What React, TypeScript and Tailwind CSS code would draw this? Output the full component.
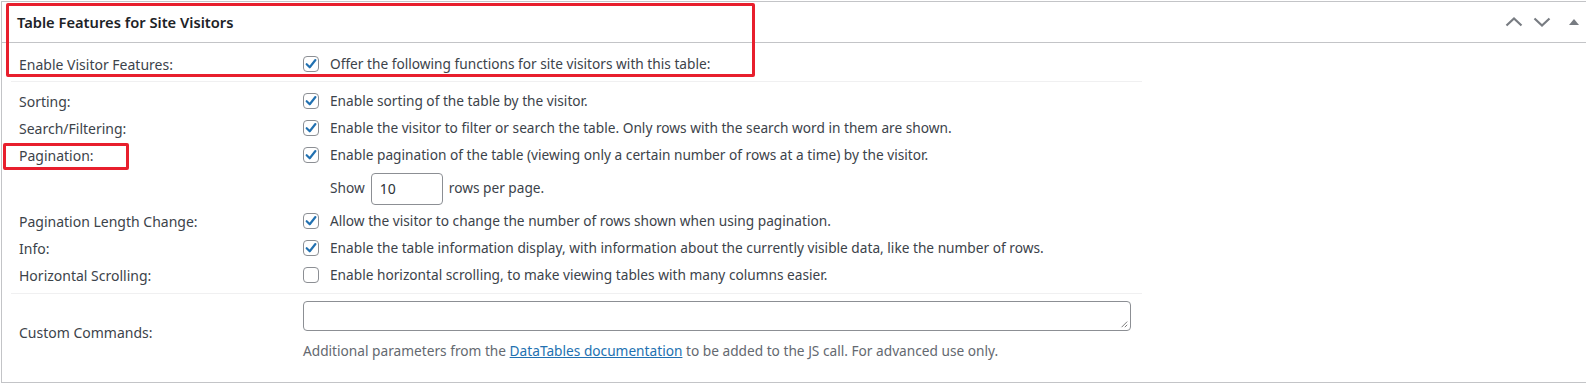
import React from "react";

const font = { fontFamily: '"Noto Sans", "Liberation Sans", Arial, sans-serif' };

function Check({ checked }: { checked: boolean }) {
  return (
    <span className="relative flex h-[16px] w-[16px] shrink-0 items-center justify-center rounded-[4px] border border-[#8c8f94] bg-white">
      {checked && (
        <svg viewBox="0 0 20 20" className="h-[18px] w-[18px] absolute left-[-2px] top-[-2px]">
          <path d="M5.2 10.2 L8.6 13.6 L14.9 5.6" fill="none" stroke="#2271b1" strokeWidth="2.4" strokeLinecap="round" strokeLinejoin="round" />
        </svg>
      )}
    </span>
  );
}

function Row({ label, checked, text }: { label: string; checked: boolean; text: string }) {
  return (
    <div className="flex h-[27px] items-center">
      <div className="w-[292px] pl-[8px] text-[14px] text-[#3c434a]">{label}</div>
      <div className="flex items-center gap-[11px] text-[13.7px] text-[#3c434a]">
        <Check checked={checked} />
        <span>{text}</span>
      </div>
    </div>
  );
}

export default function App() {
  return (
    <div className="relative h-[383px] w-[1586px] overflow-hidden bg-white" style={font}>
      <div className="ml-[1px] mt-[1px] h-[382px] border border-r-0 border-[#c3c4c7] bg-white">
        <div className="flex h-[41px] items-center justify-between border-b border-[#c3c4c7] pl-[15px]">
          <h2 className="text-[14.7px] font-semibold text-[#1d2327]">Table Features for Site Visitors</h2>
          <div className="flex items-center pr-[2px]">
            <span className="flex h-[36px] w-[28px] items-center justify-center">
              <svg viewBox="0 0 20 20" className="h-[20px] w-[20px]">
                <path d="M2.5 13.5 L10 6.5 L17.5 13.5" fill="none" stroke="#787c82" strokeWidth="2.2" />
              </svg>
            </span>
            <span className="flex h-[36px] w-[28px] items-center justify-center">
              <svg viewBox="0 0 20 20" className="h-[20px] w-[20px]">
                <path d="M2.5 6.5 L10 13.5 L17.5 6.5" fill="none" stroke="#787c82" strokeWidth="2.2" />
              </svg>
            </span>
            <span className="ml-[8px] flex h-[36px] w-[20px] items-center justify-center">
              <svg viewBox="0 0 20 20" className="h-[20px] w-[20px]">
                <path d="M5 13 L10 7 L15 13 Z" fill="#787c82" />
              </svg>
            </span>
          </div>
        </div>

        <div className="ml-[9px] w-[1131px]">
          <div className="pt-[4px]">
            <div className="flex h-[35px] items-center border-b border-[#f0f0f1]">
              <div className="w-[292px] pl-[8px] text-[14px] text-[#3c434a]">Enable Visitor Features:</div>
              <div className="flex items-center gap-[11px] text-[13.7px] text-[#3c434a]">
                <Check checked />
                <span>Offer the following functions for site visitors with this table:</span>
              </div>
            </div>
          </div>

          <div className="border-b border-[#f0f0f1] pt-[6px] pb-[4px]">
            <Row label="Sorting:" checked text="Enable sorting of the table by the visitor." />
            <Row label="Search/Filtering:" checked text="Enable the visitor to filter or search the table. Only rows with the search word in them are shown." />
            <Row label="Pagination:" checked text="Enable pagination of the table (viewing only a certain number of rows at a time) by the visitor." />
            <div className="flex h-[39px] items-center">
              <div className="w-[292px]" />
              <div className="flex items-center gap-[6px] pl-[27px] text-[13.7px] text-[#3c434a]">
                <span>Show</span>
                <div className="flex h-[32px] w-[72px] items-center rounded-[4px] border border-[#8c8f94] px-[8px] text-[14px] text-[#2c3338]">10</div>
                <span>rows per page.</span>
              </div>
            </div>
            <Row label="Pagination Length Change:" checked text="Allow the visitor to change the number of rows shown when using pagination." />
            <Row label="Info:" checked text="Enable the table information display, with information about the currently visible data, like the number of rows." />
            <Row label="Horizontal Scrolling:" checked={false} text="Enable horizontal scrolling, to make viewing tables with many columns easier." />
          </div>

          <div className="flex items-center pt-[7px]">
            <div className="w-[292px] pl-[8px] pt-[3px] text-[14px] text-[#3c434a]">Custom Commands:</div>
            <div className="flex flex-col">
              <div className="relative h-[30px] w-[828px] rounded-[4px] border border-[#8c8f94] bg-white">
                <svg viewBox="0 0 10 10" className="absolute bottom-[2px] right-[2px] h-[8px] w-[8px]">
                  <path d="M9 2 L2 9 M9 6 L6 9" stroke="#767676" strokeWidth="1.2" />
                </svg>
              </div>
              <p className="mt-[10px] text-[13.7px] text-[#646970]">
                Additional parameters from the{" "}
                <a className="text-[#2271b1] underline">DataTables documentation</a> to be added to the JS call. For advanced use only.
              </p>
            </div>
          </div>
        </div>
      </div>

      <div className="pointer-events-none absolute left-[6px] top-[3px] h-[74px] w-[749px] rounded-[2px] border-[3px] border-[#e81f2d]" />
      <div className="pointer-events-none absolute left-[3px] top-[143px] h-[27px] w-[126px] rounded-[2px] border-[3px] border-[#e81f2d]" />
    </div>
  );
}
